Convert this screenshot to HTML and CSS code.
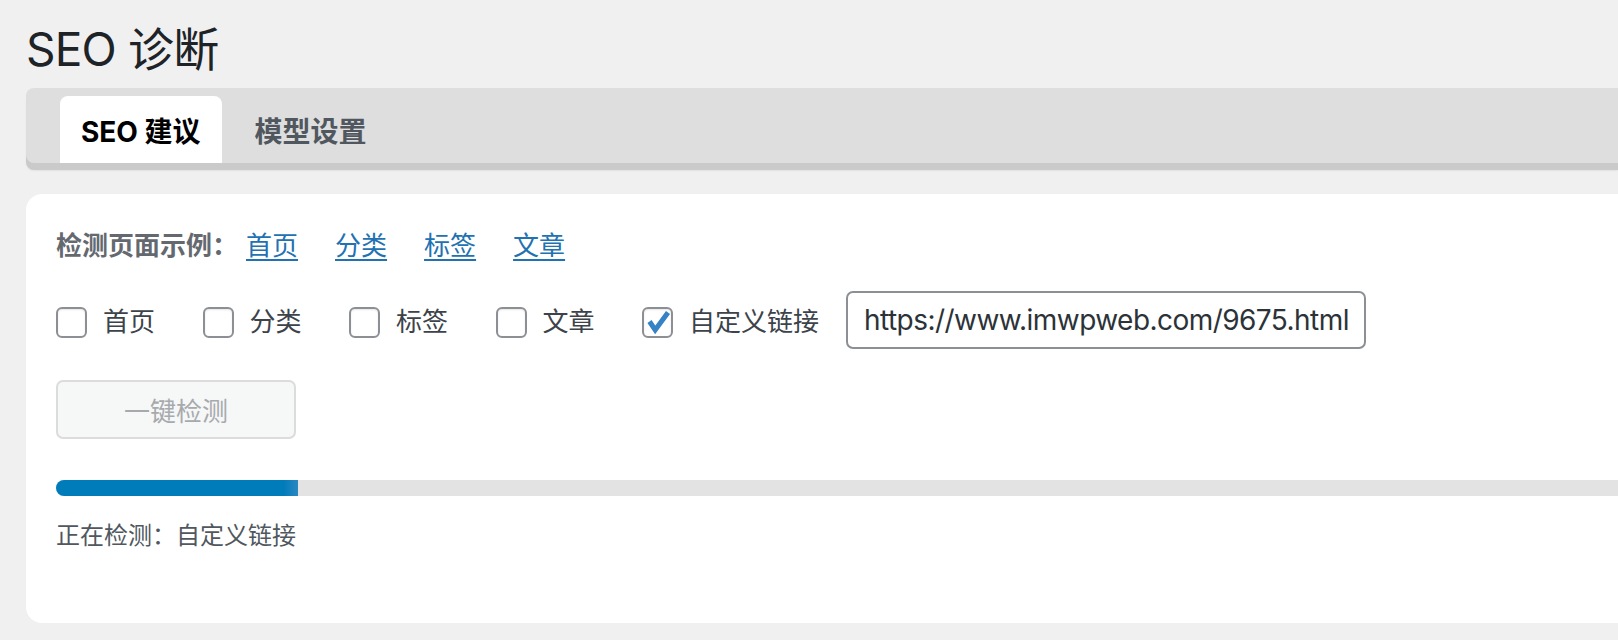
FILE: index.html
```html
<!DOCTYPE html>
<html lang="zh-CN">
<head>
<meta charset="utf-8">
<title>SEO 诊断</title>
<link rel="stylesheet" href="styles.css">
</head>
<body>
<div class="page">
  <h1 class="title">SEO 诊断</h1>
  <nav class="tabs">
    <a class="tab tab-active" href="#">SEO 建议</a>
    <a class="tab" href="#">模型设置</a>
  </nav>
  <section class="card">
    <div class="examples">
      <span class="ex-label">检测页面示例：</span>
      <a class="ex-link" href="#">首页</a>
      <a class="ex-link" href="#">分类</a>
      <a class="ex-link" href="#">标签</a>
      <a class="ex-link" href="#">文章</a>
    </div>
    <div class="targets">
      <label class="opt"><span class="box"></span><span class="opt-text">首页</span></label>
      <label class="opt"><span class="box"></span><span class="opt-text">分类</span></label>
      <label class="opt"><span class="box"></span><span class="opt-text">标签</span></label>
      <label class="opt"><span class="box"></span><span class="opt-text">文章</span></label>
      <label class="opt opt-last"><span class="box box-checked"><svg viewBox="0 0 26 26" width="26" height="26"><path d="M4.5 12.5 L10.2 21 L23 3.5" fill="none" stroke="#3582c4" stroke-width="5" stroke-linejoin="miter" stroke-linecap="butt"/></svg></span><span class="opt-text">自定义链接</span></label>
      <input class="url" type="text" value="https://www.imwpweb.com/9675.html">
    </div>
    <button class="run" type="button" disabled>一键检测</button>
    <div class="progress"><div class="progress-fill" style="width:242px"></div></div>
    <p class="status">正在检测：自定义链接</p>
  </section>
</div>
</body>
</html>
```
FILE: styles.css
```css
html, body {
  margin: 0;
  padding: 0;
  background: #f0f0f0;
  overflow: hidden;
}

body {
  font-family: "Inter", "Noto Sans CJK SC", sans-serif;
  color: #3c434a;
}

.page {
  padding: 19px 0 0 26px;
}

.title {
  margin: 0;
  font-size: 46px;
  line-height: 60px;
  font-weight: 400;
  color: #1d2327;
  letter-spacing: -0.8px;
}

.tabs {
  margin-top: 9px;
  height: 67px;
  padding: 8px 0 0 34px;
  background: #dedede;
  border-radius: 8px 0 0 8px;
  box-shadow: 0 7px 0 #cacaca, 0 8px 2px rgba(0, 0, 0, 0.06);
  display: flex;
  align-items: stretch;
  gap: 12px;
}

.tab {
  display: flex;
  align-items: center;
  padding: 0 21px;
  font-size: 28px;
  font-weight: 700;
  color: #50575e;
  text-decoration: none;
  border-radius: 8px 8px 0 0;
}

.tab-active {
  background: #ffffff;
  color: #000000;
}

.card {
  margin-top: 31px;
  background: #ffffff;
  border-radius: 16px 0 0 16px;
  padding: 31px 0 69px 30px;
}

.examples {
  display: flex;
  align-items: center;
  height: 36px;
  font-size: 26px;
}

.ex-label {
  font-weight: 700;
  color: #646970;
  margin-right: 8px;
}

.ex-link {
  color: #2271b1;
  text-decoration: underline;
  text-underline-offset: 4px;
  text-decoration-thickness: 2px;
  margin-right: 37px;
}

.targets {
  margin-top: 30px;
  display: flex;
  align-items: center;
  height: 58px;
}

.opt {
  display: flex;
  align-items: center;
  margin-right: 47.5px;
  padding-top: 4px;
  font-size: 26px;
  color: #3c434a;
}

.opt-last {
  margin-right: 27px;
}

.box {
  width: 27px;
  height: 27px;
  border: 2px solid #8c8f94;
  border-radius: 6px;
  background: #ffffff;
  box-shadow: inset 0 1px 2px rgba(0, 0, 0, 0.1);
  margin-right: 16px;
  display: flex;
  align-items: center;
  justify-content: center;
}

.box svg {
  display: block;
}

.opt-text {
  line-height: 36px;
}

.url {
  box-sizing: border-box;
  width: 520px;
  height: 58px;
  border: 2px solid #8c8f94;
  border-radius: 7px;
  padding: 0 12px 0 16px;
  font-family: "Inter", "Noto Sans CJK SC", sans-serif;
  font-size: 28px;
  letter-spacing: -0.55px;
  color: #2c3338;
  background: #ffffff;
  outline: none;
}

.run {
  display: block;
  margin-top: 31px;
  box-sizing: border-box;
  width: 240px;
  height: 59px;
  border: 2px solid #dcdcde;
  border-radius: 7px;
  background: #f6f7f7;
  color: #a7aaad;
  font-family: "Inter", "Noto Sans CJK SC", sans-serif;
  font-size: 26px;
  padding: 0;
}

.progress {
  margin-top: 41px;
  height: 16px;
  background: #e3e3e3;
  border-radius: 8px 0 0 8px;
  overflow: hidden;
}

.progress-fill {
  height: 100%;
  background: linear-gradient(to right, #007cba 0, #007cba 94%, #2b86c0 100%);
}

.status {
  margin: 22px 0 0;
  font-size: 24px;
  line-height: 36px;
  color: #50575e;
}
```
